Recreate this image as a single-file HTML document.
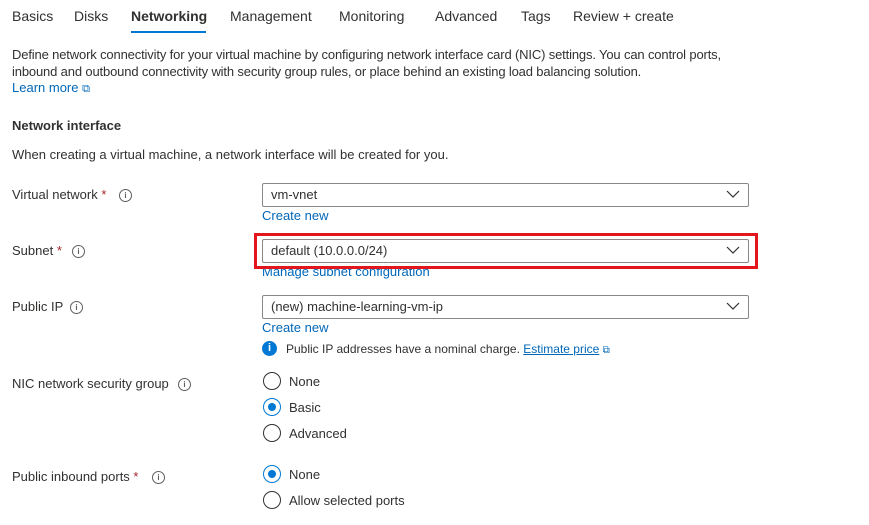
<!DOCTYPE html>
<html><head><meta charset="utf-8"><style>
body{margin:0;width:869px;height:525px;background:#fff;font-family:"Liberation Sans",sans-serif;color:#323130;position:relative;overflow:hidden}
.a{position:absolute;white-space:nowrap;font-size:13px;line-height:16px}
.tab{position:absolute;top:8px;font-size:14px;line-height:17px;white-space:nowrap}
.lnk{color:#0067b8}
.dd{position:absolute;left:262px;width:485px;height:22px;border:1px solid #8a8886;border-radius:2px;box-sizing:content-box}
.dd span{position:absolute;left:8px;top:3px;font-size:13px}
.dd svg{position:absolute;right:8px;top:6px}
.info{position:absolute;width:11px;height:11px;border:1px solid #605e5c;border-radius:50%;font-size:8px;line-height:11px;text-align:center;color:#605e5c;font-weight:bold}
.req{color:#a4262c}
.rb{position:absolute;left:263px;width:16px;height:16px;border:1px solid #323130;border-radius:50%}
.rb.on{border-color:#0078d4}
.rb.on::after{content:"";position:absolute;left:4px;top:4px;width:8px;height:8px;border-radius:50%;background:#0078d4}
</style></head><body>
<div class="tab" style="left:12px">Basics</div>
<div class="tab" style="left:74px">Disks</div>
<div class="tab" style="left:131px;font-weight:bold;font-size:14px">Networking</div>
<div style="position:absolute;left:131px;top:31px;width:75px;height:2px;background:#0078d4"></div>
<div class="tab" style="left:230px">Management</div>
<div class="tab" style="left:339px">Monitoring</div>
<div class="tab" style="left:435px">Advanced</div>
<div class="tab" style="left:521px">Tags</div>
<div class="tab" style="left:573px">Review + create</div>

<div class="a" style="left:12px;top:47px;letter-spacing:-0.15px">Define network connectivity for your virtual machine by configuring network interface card (NIC) settings. You can control ports,</div>
<div class="a" style="left:12px;top:64px;letter-spacing:-0.15px">inbound and outbound connectivity with security group rules, or place behind an existing load balancing solution.</div>
<div class="a lnk" style="left:12px;top:80px">Learn more <span style="font-size:11px">&#x29C9;</span></div>

<div class="a" style="left:12px;top:118px;font-weight:bold">Network interface</div>
<div class="a" style="left:12px;top:147px">When creating a virtual machine, a network interface will be created for you.</div>

<div class="a" style="left:12px;top:187px">Virtual network <span class="req">*</span></div>
<div class="info" style="left:119px;top:189px">i</div>
<div class="dd" style="top:183px"><span>vm-vnet</span><svg width="14" height="9"><path d="M1 1l6 6 6-6" fill="none" stroke="#323130" stroke-width="1.2"/></svg></div>
<div class="a lnk" style="left:262px;top:208px">Create new</div>

<div class="a" style="left:12px;top:243px">Subnet <span class="req">*</span></div>
<div class="info" style="left:72px;top:245px">i</div>
<div class="dd" style="top:239px"><span>default (10.0.0.0/24)</span><svg width="14" height="9"><path d="M1 1l6 6 6-6" fill="none" stroke="#323130" stroke-width="1.2"/></svg></div>
<div class="a lnk" style="left:262px;top:264px">Manage subnet configuration</div>
<div style="position:absolute;left:254px;top:233px;width:498px;height:30px;border:3px solid #e3161b"></div>

<div class="a" style="left:12px;top:299px">Public IP</div>
<div class="info" style="left:70px;top:301px">i</div>
<div class="dd" style="top:295px"><span>(new) machine-learning-vm-ip</span><svg width="14" height="9"><path d="M1 1l6 6 6-6" fill="none" stroke="#323130" stroke-width="1.2"/></svg></div>
<div class="a lnk" style="left:262px;top:320px">Create new</div>
<div style="position:absolute;left:262px;top:341px;width:15px;height:15px;border-radius:50%;background:#0078d4;color:#fff;font-size:11px;font-weight:bold;text-align:center;line-height:15px">i</div>
<div class="a" style="left:286px;top:341px;font-size:12px">Public IP addresses have a nominal charge. <span class="lnk" style="text-decoration:underline">Estimate price</span> <span class="lnk" style="font-size:10px">&#x29C9;</span></div>

<div class="a" style="left:12px;top:376px">NIC network security group</div>
<div class="info" style="left:178px;top:378px">i</div>
<div class="rb" style="top:372px"></div><div class="a" style="left:289px;top:374px">None</div>
<div class="rb on" style="top:398px"></div><div class="a" style="left:289px;top:400px">Basic</div>
<div class="rb" style="top:424px"></div><div class="a" style="left:289px;top:426px">Advanced</div>

<div class="a" style="left:12px;top:469px">Public inbound ports <span class="req">*</span></div>
<div class="info" style="left:152px;top:471px">i</div>
<div class="rb on" style="top:465px"></div><div class="a" style="left:289px;top:467px">None</div>
<div class="rb" style="top:491px"></div><div class="a" style="left:289px;top:493px">Allow selected ports</div>
</body></html>
